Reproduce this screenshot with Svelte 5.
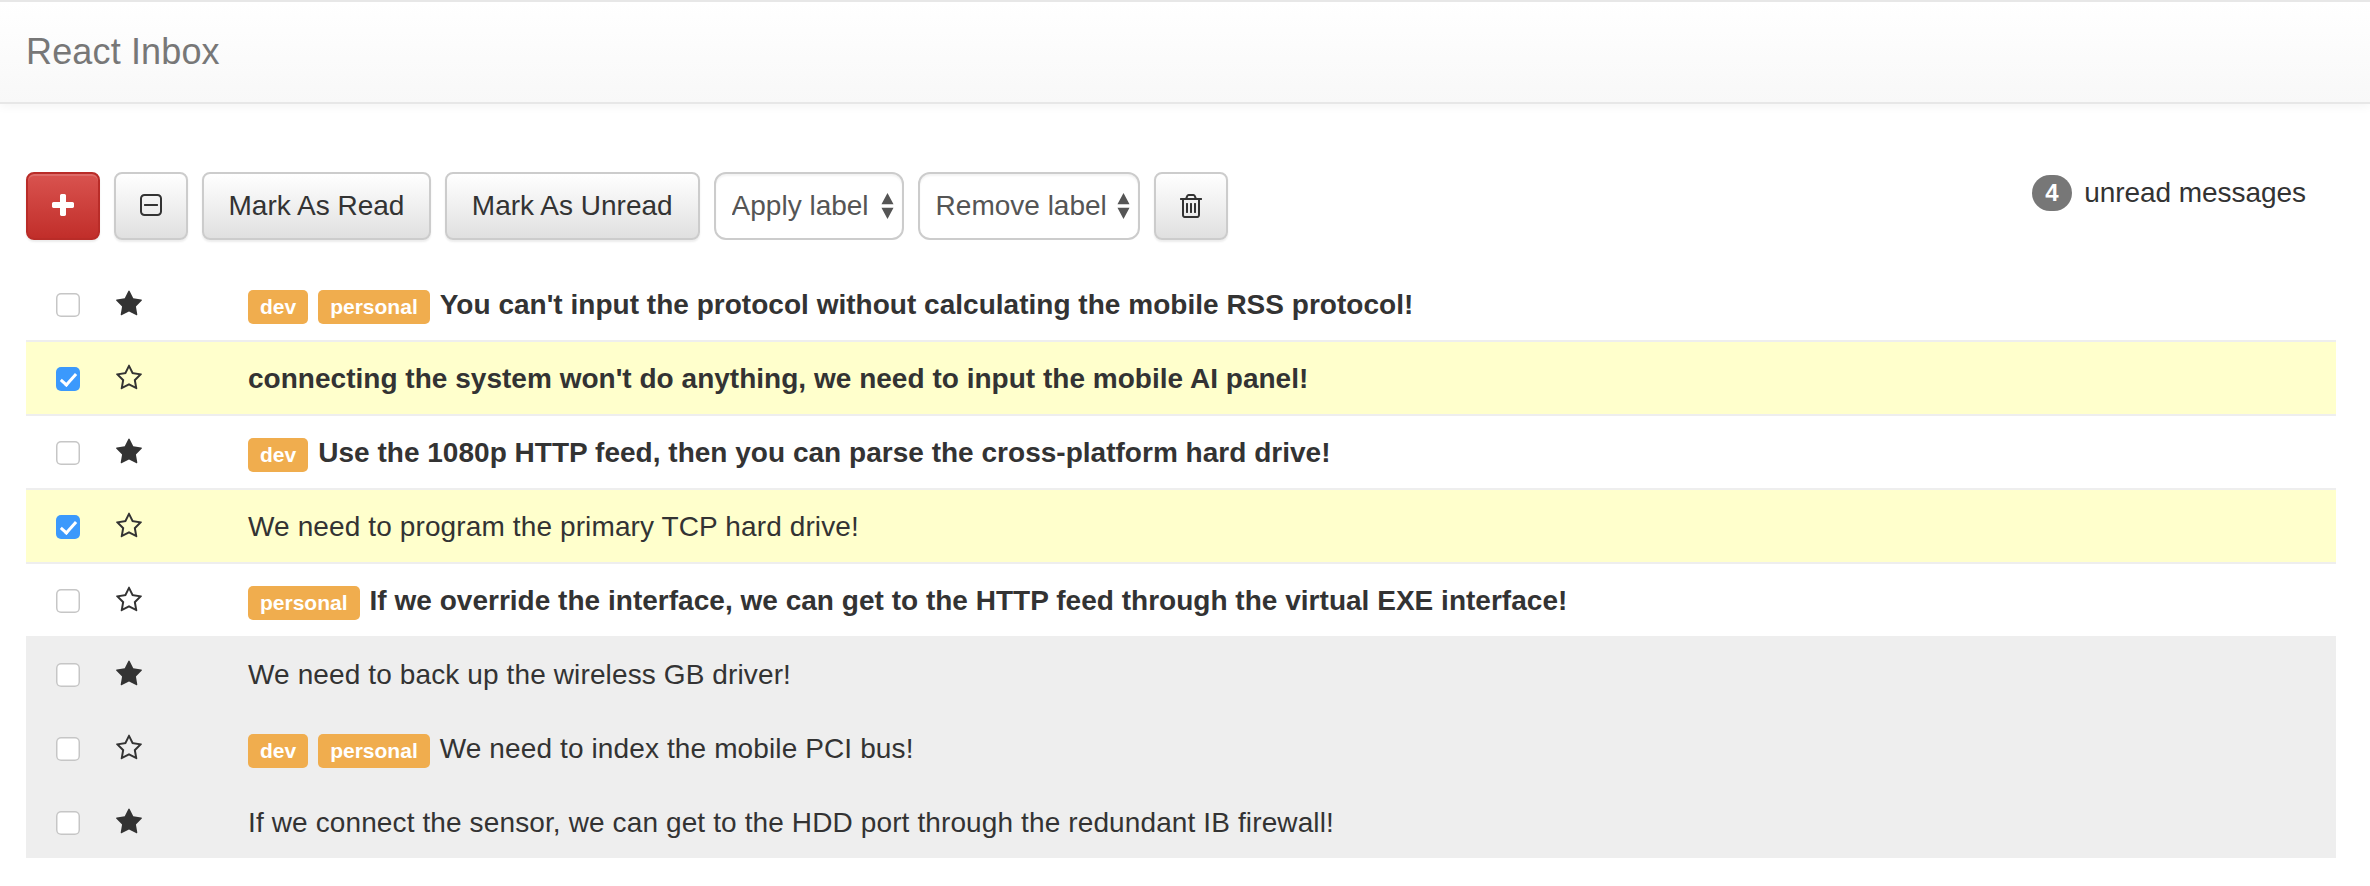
<script>
  const star = "M1728 647q0 22-26 48l-363 354 86 500q1 7 1 20 0 21-10.5 35.5t-30.5 14.5q-19 0-40-12l-449-236-449 236q-22 12-40 12-21 0-31.5-14.5t-10.5-35.5q0-6 2-20l86-500-364-354q-25-27-25-48 0-37 56-46l502-73 225-455q19-41 49-41t49 41l225 455 502 73q56 9 56 46z";
  const starO = "M1201 1004l306-297-422-62-189-382-189 382-422 62 306 297-73 421 378-199 377 199zm527-357q0 22-26 48l-363 354 86 500q1 7 1 20 0 50-41 50-19 0-40-12l-449-236-449 236q-22 12-40 12-21 0-31.5-14.5t-10.5-35.5q0-6 2-20l86-500-364-354q-25-27-25-48 0-37 56-46l502-73 225-455q19-41 49-41t49 41l225 455 502 73q56 9 56 46z";
  const plus = "M1600 736v192q0 40-28 68t-68 28h-416v416q0 40-28 68t-68 28h-192q-40 0-68-28t-28-68v-416h-416q-40 0-68-28t-28-68v-192q0-40 28-68t68-28h416v-416q0-40 28-68t68-28h192q40 0 68 28t28 68v416h416q40 0 68 28t28 68z";
  const minus = "M1344 800v64q0 14-9 23t-23 9h-832q-14 0-23-9t-9-23v-64q0-14 9-23t23-9h832q14 0 23 9t9 23zm128 448v-832q0-66-47-113t-113-47h-832q-66 0-113 47t-47 113v832q0 66 47 113t113 47h832q66 0 113-47t47-113zm128-832v832q0 119-84.5 203.5t-203.5 84.5h-832q-119 0-203.5-84.5t-84.5-203.5v-832q0-119 84.5-203.5t203.5-84.5h832q119 0 203.5 84.5t84.5 203.5z";
  const trash = "M704 736v576q0 14-9 23t-23 9h-64q-14 0-23-9t-9-23v-576q0-14 9-23t23-9h64q14 0 23 9t9 23zm256 0v576q0 14-9 23t-23 9h-64q-14 0-23-9t-9-23v-576q0-14 9-23t23-9h64q14 0 23 9t9 23zm256 0v576q0 14-9 23t-23 9h-64q-14 0-23-9t-9-23v-576q0-14 9-23t23-9h64q14 0 23 9t9 23zm128 724v-948h-896v948q0 22 7 40.5t14.5 27 10.5 8.5h832q3 0 10.5-8.5t14.5-27 7-40.5zm-672-1076h448l-48-117q-7-9-17-11h-317q-10 2-17 11zm928 32v64q0 14-9 23t-23 9h-96v948q0 83-47 143.5t-113 60.5h-832q-66 0-113-58.5t-47-141.5v-952h-96q-14 0-23-9t-9-23v-64q0-14 9-23t23-9h309l70-167q15-37 54-63t79-26h320q40 0 79 26t54 63l70 167h309q14 0 23 9t9 23z";

  const messages = [
    { text: "You can't input the protocol without calculating the mobile RSS protocol!", labels: ["dev", "personal"], starred: true, unread: true },
    { text: "connecting the system won't do anything, we need to input the mobile AI panel!", labels: [], selected: true, unread: true },
    { text: "Use the 1080p HTTP feed, then you can parse the cross-platform hard drive!", labels: ["dev"], starred: true, unread: true },
    { text: "We need to program the primary TCP hard drive!", labels: [], selected: true },
    { text: "If we override the interface, we can get to the HTTP feed through the virtual EXE interface!", labels: ["personal"], unread: true },
    { text: "We need to back up the wireless GB driver!", labels: [], starred: true },
    { text: "We need to index the mobile PCI bus!", labels: ["dev", "personal"] },
    { text: "If we connect the sensor, we can get to the HDD port through the redundant IB firewall!", labels: [], starred: true }
  ];
</script>

<div class="page">
  <nav class="navbar"><span class="brand">React Inbox</span></nav>

  <div class="toolbar">
    <div class="actions">
      <button class="btn danger" aria-label="Compose"><svg class="i plus" viewBox="0 0 1792 1792"><path d={plus} /></svg></button>
      <button class="btn icon" aria-label="Select all"><svg class="i" viewBox="0 0 1792 1792"><path d={minus} /></svg></button>
      <button class="btn read-btn">Mark As Read</button>
      <button class="btn">Mark As Unread</button>
      <span class="sel apply">
        <select><option>Apply label</option></select>
        <svg class="arrows" viewBox="0 0 14 28"><path d="M7 0l6.5 12H.5zM7 28L.5 16h13z" /></svg>
      </span>
      <span class="sel remove">
        <select><option>Remove label</option></select>
        <svg class="arrows" viewBox="0 0 14 28"><path d="M7 0l6.5 12H.5zM7 28L.5 16h13z" /></svg>
      </span>
      <button class="btn icon" aria-label="Delete"><svg class="i" viewBox="0 0 1792 1792"><path d={trash} /></svg></button>
    </div>
    <p class="unread"><span class="badge">4</span>unread messages</p>
  </div>

  <div class="list">
    {#each messages as m}
      <div class="row" class:selected={m.selected} class:read={!m.unread && !m.selected} class:unread-row={m.unread}>
        <div class="tools">
          <input type="checkbox" checked={m.selected} />
          <svg class="star" viewBox="0 0 1792 1792"><path d={m.starred ? star : starO} /></svg>
        </div>
        <div class="body">
          {#each m.labels as l}<span class="label">{l}</span>{/each}<a href="#top">{m.text}</a>
        </div>
      </div>
    {/each}
  </div>
</div>

<style>
  :global(body) { margin: 0; background: #fff; }
  .page {
    font-family: "Liberation Sans", Arial, sans-serif;
    font-size: 28px;
    line-height: 40px;
    color: #333;
    height: 886px;
    overflow: hidden;
  }
  .navbar {
    height: 100px;
    display: flex;
    align-items: center;
    padding-left: 26px;
    border-top: 2px solid #e7e7e7;
    border-bottom: 2px solid #e7e7e7;
    background: linear-gradient(to bottom, #fff, #f8f8f8);
    box-shadow: inset 0 2px 0 rgba(255,255,255,.15), 0 2px 10px rgba(0,0,0,.05);
  }
  .brand { font-size: 36px; color: #777; letter-spacing: .15px; }
  .toolbar {
    display: flex;
    justify-content: space-between;
    padding: 68px 64px 0 26px;
    height: 94px;
  }
  .actions { display: flex; gap: 14px; align-items: flex-start; }
  .btn {
    height: 68px;
    box-sizing: border-box;
    padding: 0 25px;
    font: inherit;
    color: #333;
    border: 2px solid #ccc;
    border-radius: 8px;
    background: linear-gradient(to bottom, #fff, #e0e0e0);
    box-shadow: inset 0 2px 0 rgba(255,255,255,.15), 0 2px 2px rgba(0,0,0,.075);
    display: flex;
    align-items: center;
    justify-content: center;
    white-space: nowrap;
  }
  .btn.read-btn { padding: 0 24.5px; }
  .btn.icon, .btn.danger { padding: 0; width: 74px; }
  .btn.danger {
    border-color: #b92c28;
    background: linear-gradient(to bottom, #d9534f, #c12e2a);
  }
  .i { width: 28px; height: 28px; fill: #333; }
  .plus { fill: #fff; }
  .sel { position: relative; display: block; }
  .sel.apply { width: 190px; }
  .sel.remove { width: 222px; }
  select {
    appearance: none;
    -webkit-appearance: none;
    width: 100%;
    height: 68px;
    box-sizing: border-box;
    border: 2px solid #ccc;
    border-radius: 12px;
    background: #fff;
    color: #555;
    font: inherit;
    padding: 0 0 0 16px;
    box-shadow: inset 0 2px 2px rgba(0,0,0,.05);
  }
  .arrows {
    position: absolute;
    right: 10px;
    top: 21px;
    width: 13px;
    height: 26px;
    fill: #555;
    pointer-events: none;
  }
  .unread {
    margin: 0;
    display: flex;
    align-items: center;
    height: 40px;
    margin-top: 1px;
    letter-spacing: -.05px;
  }
  .badge {
    background: #777;
    color: #fff;
    font-size: 24px;
    font-weight: bold;
    line-height: 24px;
    padding: 6px 13.5px;
    border-radius: 20px;
    margin-right: 12px;
  }
  .list { margin: 0 34px 0 26px; }
  .row {
    display: flex;
    height: 74px;
    box-sizing: border-box;
    border-top: 2px solid transparent;
    align-items: center;
    background: #fff;
    letter-spacing: .12px;
  }
  .row.selected {
    background: #ffc;
    border-top-color: #eee;
    border-bottom: 2px solid #eee;
    margin-bottom: -2px;
    position: relative;
    height: 76px;
  }
  .row.read { background: #eee; }
  .unread-row { letter-spacing: .02px; }
  .unread-row .body { font-weight: bold; }
  .tools {
    width: 222px;
    flex: none;
    display: flex;
    align-items: center;
    padding-left: 30px;
    box-sizing: border-box;
  }
  input[type="checkbox"] {
    appearance: none;
    -webkit-appearance: none;
    width: 24px;
    height: 24px;
    margin: 2px 35px 0 0;
    border-radius: 5px;
    background: #fff;
    box-shadow: inset 0 0 0 1.5px #c6c6c6;
    position: relative;
    flex: none;
  }
  input[type="checkbox"]:checked {
    background: #3b99fc;
    box-shadow: none;
  }
  input[type="checkbox"]:checked::after {
    content: "";
    position: absolute;
    left: 8px;
    top: 3px;
    width: 6px;
    height: 13px;
    border: solid #fff;
    border-width: 0 3px 3px 0;
    transform: rotate(42deg);
  }
  .star { width: 28px; height: 28px; fill: #333; flex: none; }
  .body { display: flex; align-items: center; white-space: nowrap; padding-top: 2px; }
  .body a { color: #333; text-decoration: none; }
  .label {
    background: #f0ad4e;
    color: #fff;
    font-size: 21px;
    font-weight: bold;
    line-height: 21px;
    padding: 6px 12px 7px;
    border-radius: 5px;
    margin: 4px 10px 0 0;
    letter-spacing: 0;
  }
</style>
